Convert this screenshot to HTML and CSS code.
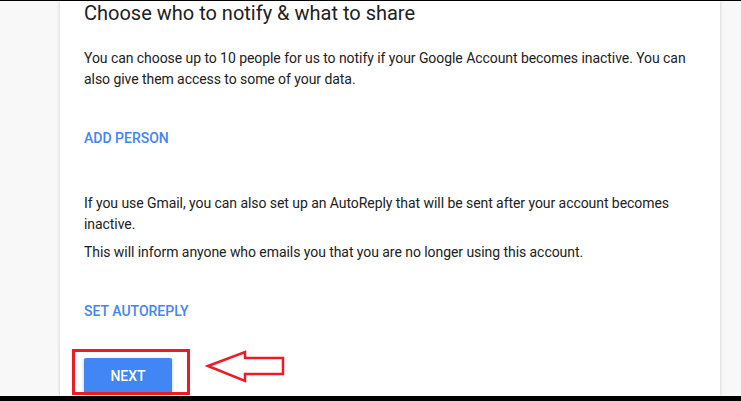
FILE: index.html
```html
<!DOCTYPE html>
<html>
<head>
<meta charset="UTF-8">
<title>Inactive Account Manager</title>
<link rel="stylesheet" href="styles.css">
</head>
<body>
<div class="page">
	<div class="card">
		<h2>Choose who to notify &amp; what to share</h2>
		<p class="intro">You can choose up to 10 people for us to notify if your Google Account becomes inactive. You can also give them access to some of your data.</p>
		<a class="link add-person" href="#">ADD PERSON</a>

		<p class="gmail">If you use Gmail, you can also set up an AutoReply that will be sent after your account becomes inactive.</p>
		<p class="inform">This will inform anyone who emails you that you are no longer using this account.</p>
		<a class="link autoreply" href="#">SET AUTOREPLY</a>

		<div class="actions">
			<button class="next">NEXT</button>
			<div class="highlight"></div>
			<svg class="arrow" width="82" height="38" viewBox="0 0 82 38">
				<polygon points="3,17 40,3 40,9 78,9 78,25 40,25 40,32" fill="none" stroke="#ed1c24" stroke-width="2.5" stroke-linejoin="miter"/>
			</svg>
		</div>
	</div>
</div>
</body>
</html>
```

FILE: styles.css
```css
html {
	background-color: #000;
}

body {
	margin: 0;
	font-family: Roboto, "Liberation Sans", sans-serif;
	color: #212121;
}

.page {
	margin-top: 1px;
	height: 395px;
	overflow: hidden;
	background-color: #f8f8f8;
}

.card {
	margin-left: 60px;
	width: 612px;
	height: 395px;
	padding: 0 24px;
	background-color: #fff;
	box-shadow: 0 0 3px rgba(0, 0, 0, 0.22);
}

h2 {
	margin: 0;
	font-size: 20px;
	font-weight: 400;
	line-height: 24px;
}

p {
	margin: 0;
	font-size: 14px;
	line-height: 21px;
	letter-spacing: -0.06px;
}

.intro {
	margin-top: 23px;
}

.link {
	display: block;
	color: #4285f4;
	font-size: 14px;
	font-weight: 500;
	line-height: 21px;
	text-decoration: none;
}

.add-person {
	margin-top: 38px;
}

.gmail {
	margin-top: 44px;
}

.inform {
	margin-top: 7px;
}

.autoreply {
	margin-top: 38px;
}

.actions {
	position: relative;
	margin-top: 36px;
}

.next {
	width: 88px;
	height: 36px;
	border: none;
	border-radius: 2px;
	background-color: #4285f4;
	color: #fff;
	font-family: Roboto, "Liberation Sans", sans-serif;
	font-size: 14px;
	font-weight: 500;
	box-shadow: 0 1px 3px rgba(0, 0, 0, 0.3);
}

.highlight {
	position: absolute;
	left: -12px;
	top: -9px;
	width: 112px;
	height: 40px;
	border: 3px solid #ed1c24;
}

.arrow {
	position: absolute;
	left: 121px;
	top: -9px;
}
```
